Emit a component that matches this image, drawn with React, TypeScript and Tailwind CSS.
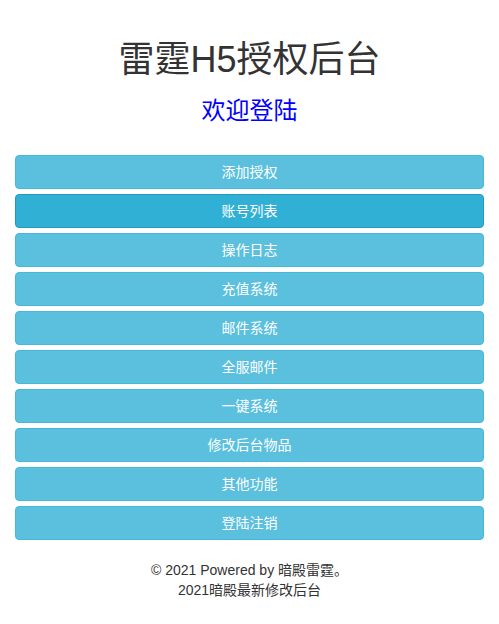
const items = [
  '添加授权',
  '账号列表',
  '操作日志',
  '充值系统',
  '邮件系统',
  '全服邮件',
  '一键系统',
  '修改后台物品',
  '其他功能',
  '登陆注销',
]

export default function App() {
  const active = '账号列表'

  return (
    <div className="min-h-screen bg-white font-['Liberation_Sans','Noto_Sans_CJK_SC',sans-serif] text-[14px] text-[#333]">
      <div className="px-[15px] pt-[40px] pb-[20px]">
        <h1 className="text-center text-[36px] leading-[40px] text-[#333]">雷霆H5授权后台</h1>
        <h3 className="mt-[18px] text-center text-[24px] leading-[26px] text-[#0000ff]">欢迎登陆</h3>

        <div className="mt-[31px] flex flex-col gap-[5px]">
          {items.map(label => (
            <button
              key={label}
              className={`h-[34px] w-full rounded-[4px] border text-center text-[14px] leading-[20px] text-white ${
                label === active
                  ? 'border-[#269abc] bg-[#31b0d5]'
                  : 'border-[#46b8da] bg-[#5bc0de]'
              }`}
            >
              {label}
            </button>
          ))}
        </div>

        <footer className="mt-[20px] text-center leading-[20px] text-[#333]">
          <p>© 2021 Powered by 暗殿雷霆。</p>
          <p>2021暗殿最新修改后台</p>
        </footer>
      </div>
    </div>
  )
}
